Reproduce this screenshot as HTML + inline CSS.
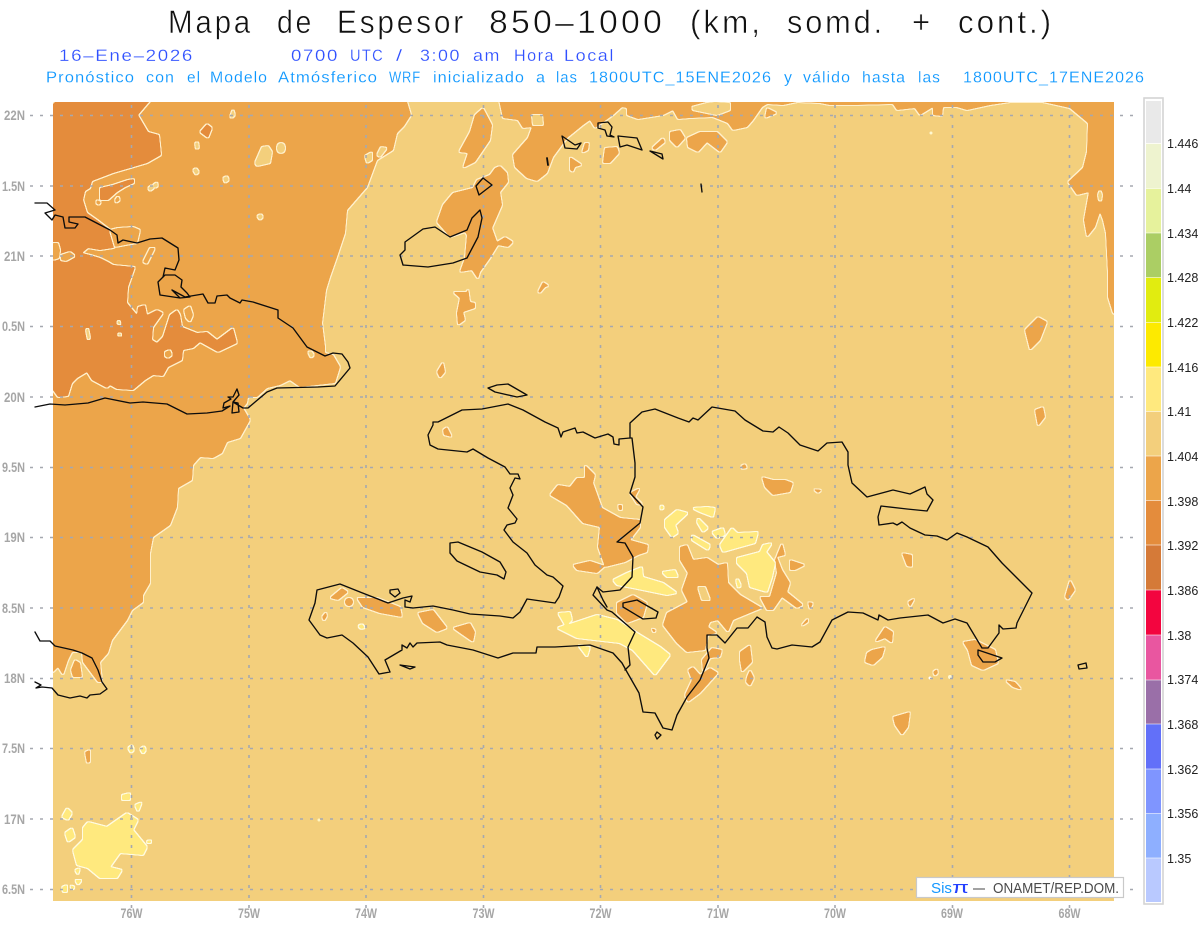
<!DOCTYPE html>
<html lang="es"><head><meta charset="utf-8"><title>Mapa de Espesor 850-1000</title>
<style>
html,body{margin:0;padding:0;background:#fff;width:1200px;height:927px;overflow:hidden}
svg{display:block;filter:blur(.3px)}
text{font-family:"Liberation Sans",sans-serif}
.c{fill:none;stroke:#0c0c0c;stroke-width:1.35;stroke-linejoin:round;stroke-linecap:round}
.g{stroke:#a5a8b0;stroke-width:1.6;stroke-dasharray:3 7;fill:none}
.ax{fill:#a6a6a6;font-size:14px;font-weight:bold}
.cb{fill:#222;font-size:12.5px}
.t{fill:#111;font-size:32px;letter-spacing:3px;stroke:#fff;stroke-width:.55px}
.s{fill:#2f50ff;font-size:17px;letter-spacing:1.5px;stroke:#fff;stroke-width:.2px}
.p{fill:#0a96ff;font-size:15.5px;letter-spacing:1px;stroke:#fff;stroke-width:.15px}
</style></head><body>
<svg width="1200" height="927" viewBox="0 0 1200 927" xmlns="http://www.w3.org/2000/svg">
<defs>
<clipPath id="mp"><rect x="53" y="102" width="1061" height="799"/></clipPath>
<filter id="fm" filterUnits="userSpaceOnUse" x="0" y="0" width="1200" height="927" color-interpolation-filters="sRGB">
<feGaussianBlur in="SourceAlpha" stdDeviation="0.9"/><feComponentTransfer result="a"><feFuncA type="linear" slope="7" intercept="-3"/></feComponentTransfer>
<feMorphology in="a" operator="dilate" radius=".8" result="o"/><feFlood flood-color="#fff0cc"/><feComposite in2="o" operator="in" result="line"/>
<feFlood flood-color="#eca54a"/><feComposite in2="a" operator="in" result="fill"/>
<feMerge><feMergeNode in="line"/><feMergeNode in="fill"/></feMerge></filter>
<filter id="fd" filterUnits="userSpaceOnUse" x="0" y="0" width="1200" height="927" color-interpolation-filters="sRGB">
<feGaussianBlur in="SourceAlpha" stdDeviation="0.9"/><feComponentTransfer result="a"><feFuncA type="linear" slope="7" intercept="-3"/></feComponentTransfer>
<feMorphology in="a" operator="dilate" radius=".8" result="o"/><feFlood flood-color="#fff0cc"/><feComposite in2="o" operator="in" result="line"/>
<feFlood flood-color="#e48c3c"/><feComposite in2="a" operator="in" result="fill"/>
<feMerge><feMergeNode in="line"/><feMergeNode in="fill"/></feMerge></filter>
<filter id="fl" filterUnits="userSpaceOnUse" x="0" y="0" width="1200" height="927" color-interpolation-filters="sRGB">
<feGaussianBlur in="SourceAlpha" stdDeviation="0.9"/><feComponentTransfer result="a"><feFuncA type="linear" slope="7" intercept="-3"/></feComponentTransfer>
<feMorphology in="a" operator="dilate" radius=".8" result="o"/><feFlood flood-color="#fff0cc"/><feComposite in2="o" operator="in" result="line"/>
<feFlood flood-color="#f3cf7c"/><feComposite in2="a" operator="in" result="fill"/>
<feMerge><feMergeNode in="line"/><feMergeNode in="fill"/></feMerge></filter>
<filter id="fy" filterUnits="userSpaceOnUse" x="0" y="0" width="1200" height="927" color-interpolation-filters="sRGB">
<feGaussianBlur in="SourceAlpha" stdDeviation="0.9"/><feComponentTransfer result="a"><feFuncA type="linear" slope="7" intercept="-3"/></feComponentTransfer>
<feMorphology in="a" operator="dilate" radius=".8" result="o"/><feFlood flood-color="#fffbe0"/><feComposite in2="o" operator="in" result="line"/>
<feFlood flood-color="#ffe97e"/><feComposite in2="a" operator="in" result="fill"/>
<feMerge><feMergeNode in="line"/><feMergeNode in="fill"/></feMerge></filter>
</defs>
<rect width="1200" height="927" fill="#fff"/>

<g class="t">
<text x="168" y="33" textLength="85" lengthAdjust="spacingAndGlyphs">Mapa</text>
<text x="277" y="33" textLength="37" lengthAdjust="spacingAndGlyphs">de</text>
<text x="337" y="33" textLength="129" lengthAdjust="spacingAndGlyphs">Espesor</text>
<text x="489" y="33" textLength="176" lengthAdjust="spacingAndGlyphs">850–1000</text>
<text x="690" y="33" textLength="73" lengthAdjust="spacingAndGlyphs">(km,</text>
<text x="787" y="33" textLength="98" lengthAdjust="spacingAndGlyphs">somd.</text>
<text x="912" y="33" textLength="21" lengthAdjust="spacingAndGlyphs">+</text>
<text x="958" y="33" textLength="96" lengthAdjust="spacingAndGlyphs">cont.)</text>
</g>
<g class="s">
<text x="59" y="61" textLength="135" lengthAdjust="spacingAndGlyphs">16–Ene–2026</text>
<text x="291" y="61" textLength="48" lengthAdjust="spacingAndGlyphs">0700</text>
<text x="350" y="61" textLength="34" lengthAdjust="spacingAndGlyphs">UTC</text>
<text x="396" y="61" textLength="8" lengthAdjust="spacingAndGlyphs">/</text>
<text x="420" y="61" textLength="41" lengthAdjust="spacingAndGlyphs">3:00</text>
<text x="473" y="61" textLength="28" lengthAdjust="spacingAndGlyphs">am</text>
<text x="514" y="61" textLength="41" lengthAdjust="spacingAndGlyphs">Hora</text>
<text x="564" y="61" textLength="51" lengthAdjust="spacingAndGlyphs">Local</text>
</g>
<g class="p">
<text x="46" y="82.5" textLength="89" lengthAdjust="spacingAndGlyphs">Pronóstico</text>
<text x="146" y="82.5" textLength="29" lengthAdjust="spacingAndGlyphs">con</text>
<text x="187" y="82.5" textLength="14" lengthAdjust="spacingAndGlyphs">el</text>
<text x="210" y="82.5" textLength="58" lengthAdjust="spacingAndGlyphs">Modelo</text>
<text x="278" y="82.5" textLength="100" lengthAdjust="spacingAndGlyphs">Atmósferico</text>
<text x="389" y="82.5" textLength="32" lengthAdjust="spacingAndGlyphs">WRF</text>
<text x="433" y="82.5" textLength="92" lengthAdjust="spacingAndGlyphs">inicializado</text>
<text x="536" y="82.5" textLength="10" lengthAdjust="spacingAndGlyphs">a</text>
<text x="556" y="82.5" textLength="22" lengthAdjust="spacingAndGlyphs">las</text>
<text x="589" y="82.5" textLength="183" lengthAdjust="spacingAndGlyphs">1800UTC_15ENE2026</text>
<text x="784" y="82.5" textLength="9" lengthAdjust="spacingAndGlyphs">y</text>
<text x="803" y="82.5" textLength="48" lengthAdjust="spacingAndGlyphs">válido</text>
<text x="862" y="82.5" textLength="44" lengthAdjust="spacingAndGlyphs">hasta</text>
<text x="918" y="82.5" textLength="23" lengthAdjust="spacingAndGlyphs">las</text>
<text x="963" y="82.5" textLength="182" lengthAdjust="spacingAndGlyphs">1800UTC_17ENE2026</text>
</g>

<g clip-path="url(#mp)">
<rect x="53" y="102" width="1061" height="799" fill="#f3cf7c"/>

<g filter="url(#fm)">
<polygon points="45,95 405,95 411,115 404,126 397,133 393,150 377,160 367,187 347,210 345,233 337,257 330,277 326,290 322,323 325,347 325,353 333,355 340,367 335,383 317,385 300,387 290,380 280,385 267,388 257,397 248,397 247,403 243,408 250,420 240,438 227,442 222,453 213,458 200,457 193,465 192,480 178,488 177,507 170,525 153,537 150,553 150,583 143,595 143,602 132,610 127,620 112,640 108,653 100,662 102,682 98,682 83,662 82,652 72,652 68,660 63,675 58,667 53,672 45,672"/>
<polygon points="498,95 503,118 518,120 523,128 532,127 528,138 513,155 515,167 527,178 537,181 547,173 553,157 567,138 583,125 590,120 595,128 613,115 622,107 627,108 627,115 638,119 663,115 673,110 678,119 690,118 713,117 728,123 733,130 747,127 753,120 762,107 767,104 783,105 797,102 820,103 830,105 853,105 893,104 897,110 915,108 920,115 933,107 933,115 942,116 943,107 957,107 967,110 990,105 1010,102 1043,102 1070,108 1088,123 1087,152 1083,168 1068,182 1077,195 1089,192 1084,220 1087,237 1095,227 1100,212 1103,220 1106,233 1108,273 1108,297 1113,313 1122,318 1122,95"/>
</g>
<g filter="url(#fd)">
<polygon points="62,95 155,95 138,115 148,132 159,135 161,155 147,163 113,173 92,181 90,188 85,191 83,200 87,213 97,220 110,230 112,240 115,247 113,248 100,250 88,248 82,253 90,255 100,258 108,262 113,265 135,267 128,287 127,303 137,315 138,307 145,305 147,315 157,310 163,313 153,327 152,340 157,343 163,337 170,315 177,310 180,315 182,327 197,333 207,332 217,340 233,328 237,343 218,352 200,342 193,348 183,350 182,360 168,367 163,376 153,375 145,380 133,390 117,389 110,385 107,388 92,380 87,372 77,378 72,383 68,396 58,397 53,390 45,392 45,112"/>
<polygon points="100,188 113,185 128,180 134,179 134,183 125,187 117,192 108,200 100,200"/>
<polygon points="200,132 207,124 212,128 208,138"/>
</g>
<g filter="url(#fl)">
<polygon points="532,115 542,115 543,125 533,125"/>
<polygon points="692,107 707,103 715,102 730,103 730,110 717,115 693,110"/>
<polygon points="255,163 262,147 268,146 272,152 270,163 257,166"/>
<ellipse cx="281" cy="148" rx="4" ry="5"/>
<polygon points="230,117 233,109 235,115 232,118"/>
<polygon points="195,143 198,142 199,148 196,149"/>
<polygon points="193,170 196,168 199,172 196,175"/>
<polygon points="223,178 227,176 229,180 225,183"/>
<polygon points="257,216 261,214 263,217 260,220"/>
<polygon points="148,188 152,185 154,188 150,191"/>
<polygon points="153,185 157,182 158,186 155,188"/>
<polygon points="365,156 372,152 372,160 367,163"/>
<polygon points="377,155 381,147 387,148 380,157"/>
<polygon points="86,330 88,328 90,338 88,340"/>
<polygon points="117,323 119,320 121,325"/>
<polygon points="117,335 120,333 122,336"/>
<polygon points="308,352 311,351 314,355 311,358"/>
<polygon points="1098,195 1100,190 1102,195 1101,201 1099,200"/>
</g>
<g filter="url(#fm)">
<polygon points="75,660 71,670 73,677 82,677 80,663"/>
<polygon points="110,230 118,228 133,227 140,230 137,243 125,245 115,247"/>
<polygon points="53,243 58,243 60,250 59,258 53,260 49,250"/>
<polygon points="61,255 70,252 75,256 66,261 61,260"/>
<polygon points="143,262 150,248 155,248 147,264"/>
<polygon points="165,352 170,350 172,355 168,358 165,356"/>
<polygon points="184,310 190,306 193,315 190,322 186,318"/>
<polygon points="115,200 118,196 120,200 116,203"/>
<polygon points="97,200 101,202 99,205 96,203"/>
<polygon points="767,108 777,113 765,118"/>
<polygon points="483,108 492,125 490,140 475,162 463,168 468,153 459,152 470,132 475,115"/>
<polygon points="500,166 507,173 508,182 500,192 502,205 492,228 497,242 505,237 513,242 508,247 498,245 490,258 480,272 478,279 472,270 460,272 465,258 467,235 465,232 450,237 437,222 443,205 453,193 473,188 477,180 490,175 495,168"/>
<polygon points="453,292 467,292 468,287 470,302 475,303 475,308 463,312 465,320 458,325 457,313 460,298"/>
<polygon points="538,292 543,282 549,286 545,287 540,293"/>
<polygon points="585,143 589,143 588,150 582,153"/>
<polygon points="570,157 582,165 575,167 573,172 570,170"/>
<polygon points="605,148 617,147 619,153 610,163 603,163 604,155"/>
<polygon points="652,148 663,138 665,142 655,150"/>
<polygon points="670,132 680,130 685,138 677,147 670,140"/>
<polygon points="687,138 700,132 717,132 727,142 720,152 707,142 698,152 688,147"/>
<polygon points="585,465 595,475 593,483 602,508 620,518 640,520 640,527 630,540 648,545 647,552 638,555 625,562 605,567 598,547 600,527 583,523 567,505 550,495 558,485 570,487 577,478 585,478"/>
<polygon points="573,565 590,561 605,566 597,573 577,570"/>
<polygon points="330,598 342,588 348,592 338,600"/>
<circle cx="349" cy="602" r="4"/>
<polygon points="357,598 377,598 400,607 402,617 380,613 363,607"/>
<polygon points="418,613 433,610 447,628 437,632 423,623"/>
<polygon points="453,628 470,623 475,632 473,642 460,633"/>
<polygon points="443,430 447,427 452,437 444,435"/>
<polygon points="630,493 640,488 635,497 643,505 637,504"/>
<polygon points="617,603 633,595 647,603 643,617 627,623 617,613"/>
<polygon points="618,505 622,505 622,510 619,510"/>
<polygon points="322,617 326,612 327,616 324,621"/>
<polygon points="651,628 656,630 654,633"/>
<polygon points="680,547 687,545 693,560 707,558 718,565 727,563 728,583 740,595 762,608 733,620 728,632 718,620 710,622 708,627 717,633 708,635 705,650 687,652 677,643 663,625 667,613 688,602 682,590 688,573 680,560"/>
<polygon points="782,543 785,555 777,557 782,570 790,583 787,592 803,605 797,608 782,597 773,610 767,610 760,597 770,597 777,573 775,560"/>
<polygon points="790,560 805,565 795,570 790,570"/>
<polygon points="808,602 813,603 810,610"/>
<polygon points="800,627 808,618 808,622 802,626"/>
<polygon points="740,652 750,645 752,662 742,672 740,660"/>
<polygon points="747,677 750,670 754,678 750,686 746,682"/>
<polygon points="702,660 712,648 722,650 720,657 710,658 703,672"/>
<polygon points="688,670 693,667 700,675 710,668 718,673 700,693 688,702 685,695 692,680"/>
<polygon points="762,477 773,480 785,480 793,483 790,492 773,495 765,487"/>
<polygon points="813,489 822,490 818,493"/>
<polygon points="741,466 745,464 747,468 742,469"/>
<polygon points="902,553 912,555 912,567 907,566"/>
<polygon points="908,602 915,598 910,607"/>
<polygon points="885,627 893,632 892,643 885,638 875,642"/>
<polygon points="872,650 885,647 882,657 873,665 865,662 867,653"/>
<polygon points="963,642 975,640 995,650 998,663 983,670 972,665 968,650"/>
<polygon points="1005,680 1015,682 1022,690 1013,687"/>
<polygon points="893,717 910,712 908,727 902,735 895,725"/>
<polygon points="933,672 937,669 938,673 935,676"/>
<polygon points="1035,410 1043,407 1045,417 1038,426"/>
<polygon points="1025,330 1038,317 1047,322 1040,340 1030,350"/>
<polygon points="1065,597 1070,580 1075,590 1068,600"/>
<polygon points="437,372 443,362 445,372 440,378"/>
<polygon points="85,752 90,750 90,762 87,763"/>
</g>
<g filter="url(#fl)">
<polygon points="698,587 705,587 710,600 702,600"/>
</g>
<g filter="url(#fy)">
<polygon points="558,613 570,612 572,620 567,625 597,615 617,620 637,633 660,647 670,655 655,675 633,650 620,643 577,638 557,628 565,625"/>
<polygon points="613,580 627,573 642,567 643,577 663,583 677,593 667,595 633,588 617,585"/>
<polygon points="662,572 675,570 678,577 667,577"/>
<polygon points="578,645 590,647 587,657"/>
<polygon points="665,520 677,510 688,513 675,525 678,533 672,537 665,527"/>
<polygon points="692,508 707,507 715,508 713,517 700,512"/>
<polygon points="698,518 708,528 703,532 697,522"/>
<polygon points="692,535 710,545 708,550 692,540"/>
<polygon points="712,532 723,528 725,535 717,538"/>
<polygon points="720,545 732,528 737,533 758,532 755,543 737,548 723,552"/>
<polygon points="763,545 772,543 766,552 775,563 772,577 767,592 750,587 747,573 737,563 737,558 760,552"/>
<polygon points="736,580 738,579 741,586 738,588"/>
<polygon points="660,507 662,505 664,508 661,510"/>
<polygon points="358,626 362,624 365,628 361,629"/>
<polygon points="88,822 107,827 127,813 138,820 133,830 147,847 143,855 120,853 110,867 122,870 117,878 100,878 88,868 77,865 73,850 83,840 83,828"/>
<polygon points="62,817 67,808 72,813 68,820"/>
<polygon points="65,833 72,828 75,837 68,842"/>
<polygon points="135,805 142,802 138,812"/>
<polygon points="122,795 130,793 130,800 122,800"/>
<polygon points="62,887 67,885 67,892 63,892"/>
<polygon points="70,885 75,887 72,890"/>
<polygon points="75,880 82,880 78,885"/>
<polygon points="75,870 80,868 78,875"/>
<polygon points="128,748 132,745 134,750 131,753"/>
<polygon points="140,749 144,746 146,750 143,754"/>
<polygon points="147,841 151,840 151,843 147,843"/>
</g>
<circle cx="319" cy="820" r="1.5" fill="#fff4c0"/>
<circle cx="930" cy="678" r="1.5" fill="#fff"/>
<circle cx="950" cy="677" r="2" fill="#fff8d0"/>
<circle cx="931" cy="133" r="1.5" fill="#fff8d0"/>
</g>

<g class="g">
<path d="M30 115.5H1134M30 186H1134M30 256H1134M30 326.5H1134M30 397H1134M30 467.5H1134M30 537.5H1134M30 608H1134M30 678.5H1134M30 748.5H1134M30 819H1134M30 889.5H1134"/>
<path d="M131.5 105V910M249 105V910M366 105V910M483.5 105V910M600.5 105V910M718 105V910M835 105V910M952.5 105V910M1069.5 105V910"/>
</g>

<g class="c">
<path d="M433,422 438,422 462,410 482,409 508,404 523,410 545,422 558,428 561,437 563,432 575,428 577,433 583,432 595,438 608,434 613,437 614,444 619,445 619,439 630,438 630,423 642,412 655,409 678,418 689,422 693,418 698,420 712,407 735,411 745,420 763,431 773,432 779,427 788,433 800,445 818,451 827,443 842,442 848,452 848,465 852,483 867,497 893,490 910,494 925,487 927,494 933,500 927,511 907,509 881,506 878,517 879,525 893,523 897,525 902,522 910,528 925,535 937,536 947,540 957,533 967,537 988,547 1002,563 1032,593 1017,623 1016,628 1003,629 999,625 999,633 988,648 982,648 967,623 955,619 943,623 928,615 900,618 888,620 879,615 878,620 863,613 848,612 832,620 820,642 812,647 792,645 777,649 772,648 767,637 765,622 757,617 748,628 737,628 725,643 717,635 707,635 707,648 709,658 700,680 687,697 677,715 672,730 663,728 655,713 643,712 639,693 627,672 622,663 613,653 590,645 555,647 537,647 536,653 513,653 498,658 473,650 447,645 440,642 417,643 413,647 410,643 407,648 402,645 402,650 385,660 390,672 379,674 368,657 353,643 342,635 327,638 320,635 309,620 315,603 317,590 340,584 360,592 388,603 403,598 412,596 410,602 405,600 405,607 413,608 433,606 453,610 470,614 500,616 513,618 520,612 527,599 555,603 559,597 563,586 553,577 547,575 535,565 527,553 513,542 504,530 507,525 515,523 517,519 508,508 513,495 510,488 515,478 520,479 518,474 510,474 505,467 488,458 473,449 467,452 438,449 430,445 428,435 433,425Z"/>
<path d="M630,438 632,438 635,463 635,477 630,493 643,507 640,523 617,542 625,543 633,557 632,577 620,590 603,592 597,587 593,595 607,610 612,612 635,632 628,647 630,665 625,670"/>
<path d="M597,587 603,600 607,607"/>
<path d="M623,603 637,600 658,612 656,618 643,619 623,607Z"/>
<path d="M450,543 458,542 482,552 500,562 506,572 504,579 497,575 480,572 457,561 450,553Z"/>
<path d="M488,388 497,385 508,384 527,395 517,397 495,392Z"/>
<path d="M390,590 398,589 400,593 395,597 390,593Z"/>
<path d="M400,665 415,667 410,669Z"/>
<path d="M978,650 1002,658 995,662 983,662 978,655Z"/>
<path d="M655,735 657,732 661,735 657,739Z"/>
<path d="M1078,665 1086,663 1087,668 1079,669Z"/>
<path d="M35,407 50,404 65,405 88,403 105,398 130,403 143,402 167,404 187,414 207,413 222,411 230,406 223,408 224,403 231,399 228,397 233,397 237,389 239,395 233,402 232,413 239,412 238,403 233,402 243,408 248,408 267,392 277,388 318,387 335,386 350,368 348,362 342,354 333,353 325,356 307,347 293,328 278,318 278,310 253,302 242,300 240,303 230,298 227,295 217,296 215,303 208,303 203,294 185,297 172,290 180,298 190,297 187,293 181,287 182,280 175,275 165,275 163,277 158,282 160,295 180,298"/>
<path d="M35,203 47,203 55,210 45,213 52,220 55,215 63,217 65,228 75,228 78,224 69,222 69,217 85,217 110,230 117,235 118,243 123,240 137,243 150,239 162,238 178,248 179,260 175,270 165,268 163,277"/>
<path d="M35,632 40,641 50,641 55,646 73,650 82,653 92,658 98,670 102,682 107,689 100,694 90,695 87,698 80,696 70,698 58,695 52,688 42,687 36,688 41,685 35,682"/>
<path d="M403,265 400,255 405,250 405,242 423,229 435,227 450,237 467,230 472,218 480,210 482,218 478,237 467,258 453,263 428,267 403,265"/>
<path d="M476,186 483,178 492,185 479,195Z"/>
<path d="M562,136 575,145 581,143 577,149 565,148Z"/>
<path d="M547,158 548,165" style="stroke-width:1.8"/>
<path d="M598,123 608,122 612,127 610,135 614,137 607,136 605,130 598,128Z"/>
<path d="M618,136 637,138 642,150 627,145 620,147Z"/>
<path d="M650,151 662,154 663,159Z"/>
<path d="M701,184 702,192"/>
</g>

<g class="ax" text-anchor="end">
<text x="25" y="120" textLength="21" lengthAdjust="spacingAndGlyphs">22N</text>
<text x="25" y="191" textLength="23" lengthAdjust="spacingAndGlyphs">1.5N</text>
<text x="25" y="261" textLength="21" lengthAdjust="spacingAndGlyphs">21N</text>
<text x="25" y="331" textLength="23" lengthAdjust="spacingAndGlyphs">0.5N</text>
<text x="25" y="402" textLength="21" lengthAdjust="spacingAndGlyphs">20N</text>
<text x="25" y="472" textLength="23" lengthAdjust="spacingAndGlyphs">9.5N</text>
<text x="25" y="542" textLength="21" lengthAdjust="spacingAndGlyphs">19N</text>
<text x="25" y="613" textLength="23" lengthAdjust="spacingAndGlyphs">8.5N</text>
<text x="25" y="683" textLength="21" lengthAdjust="spacingAndGlyphs">18N</text>
<text x="25" y="753" textLength="23" lengthAdjust="spacingAndGlyphs">7.5N</text>
<text x="25" y="824" textLength="21" lengthAdjust="spacingAndGlyphs">17N</text>
<text x="25" y="894" textLength="23" lengthAdjust="spacingAndGlyphs">6.5N</text>
</g>
<g class="ax" text-anchor="middle">
<text x="131.5" y="918" textLength="22" lengthAdjust="spacingAndGlyphs">76W</text>
<text x="249" y="918" textLength="22" lengthAdjust="spacingAndGlyphs">75W</text>
<text x="366" y="918" textLength="22" lengthAdjust="spacingAndGlyphs">74W</text>
<text x="483.5" y="918" textLength="22" lengthAdjust="spacingAndGlyphs">73W</text>
<text x="600.5" y="918" textLength="22" lengthAdjust="spacingAndGlyphs">72W</text>
<text x="718" y="918" textLength="22" lengthAdjust="spacingAndGlyphs">71W</text>
<text x="835" y="918" textLength="22" lengthAdjust="spacingAndGlyphs">70W</text>
<text x="952" y="918" textLength="22" lengthAdjust="spacingAndGlyphs">69W</text>
<text x="1069.5" y="918" textLength="22" lengthAdjust="spacingAndGlyphs">68W</text>
</g>

<rect x="916.5" y="877.5" width="207" height="20" fill="#fff" stroke="#c9c9c9" stroke-width="1.2"/>
<text x="931" y="893" font-size="15" fill="#1597ff" textLength="21" lengthAdjust="spacingAndGlyphs">Sis</text>
<text x="952" y="893" font-size="17" fill="#2440ff" textLength="17" lengthAdjust="spacingAndGlyphs">π</text>
<text x="973" y="893" font-size="15" fill="#444" textLength="12" lengthAdjust="spacingAndGlyphs">–</text>
<text x="993" y="893" font-size="14.5" fill="#4a4a4a" textLength="126" lengthAdjust="spacingAndGlyphs">ONAMET/REP.DOM.</text>

<rect x="1144" y="98" width="19" height="806" fill="#fff" stroke="#d4d4d4" stroke-width="1.6"/>
<g>
<rect x="1146" y="101" width="15" height="42" fill="#e9e9e9"/>
<rect x="1146" y="143.5" width="15" height="45" fill="#eef3cf"/>
<rect x="1146" y="188.5" width="15" height="44.5" fill="#e6f29c"/>
<rect x="1146" y="233" width="15" height="44.5" fill="#abce64"/>
<rect x="1146" y="277.5" width="15" height="45" fill="#e1ec10"/>
<rect x="1146" y="322.5" width="15" height="44.5" fill="#fdea00"/>
<rect x="1146" y="367" width="15" height="44.5" fill="#ffe97e"/>
<rect x="1146" y="411.5" width="15" height="44.5" fill="#f3cf7c"/>
<rect x="1146" y="456" width="15" height="44.5" fill="#eca54a"/>
<rect x="1146" y="500.5" width="15" height="44.5" fill="#e48c3c"/>
<rect x="1146" y="545" width="15" height="45" fill="#d57a38"/>
<rect x="1146" y="590" width="15" height="45" fill="#f3053f"/>
<rect x="1146" y="635" width="15" height="45" fill="#e956a0"/>
<rect x="1146" y="680" width="15" height="44" fill="#9a6fa8"/>
<rect x="1146" y="724" width="15" height="45" fill="#6270f9"/>
<rect x="1146" y="769" width="15" height="44.5" fill="#7f95ff"/>
<rect x="1146" y="813.5" width="15" height="44.5" fill="#8eafff"/>
<rect x="1146" y="858" width="15" height="44" fill="#b9c9ff"/>
</g>
<path d="M1146 143.5H1161M1146 188.5H1161M1146 233H1161M1146 277.5H1161M1146 322.5H1161M1146 367H1161M1146 411.5H1161M1146 456H1161M1146 500.5H1161M1146 545H1161M1146 590H1161M1146 635H1161M1146 680H1161M1146 724H1161M1146 769H1161M1146 813.5H1161M1146 858H1161" stroke="#fff" stroke-opacity=".75" stroke-width=".8"/>
<g class="cb">
<text x="1167" y="148">1.446</text>
<text x="1167" y="193">1.44</text>
<text x="1167" y="238">1.434</text>
<text x="1167" y="282">1.428</text>
<text x="1167" y="327">1.422</text>
<text x="1167" y="372">1.416</text>
<text x="1167" y="416">1.41</text>
<text x="1167" y="461">1.404</text>
<text x="1167" y="506">1.398</text>
<text x="1167" y="550">1.392</text>
<text x="1167" y="595">1.386</text>
<text x="1167" y="640">1.38</text>
<text x="1167" y="684">1.374</text>
<text x="1167" y="729">1.368</text>
<text x="1167" y="774">1.362</text>
<text x="1167" y="818">1.356</text>
<text x="1167" y="863">1.35</text>
</g>
</svg>
</body></html>
